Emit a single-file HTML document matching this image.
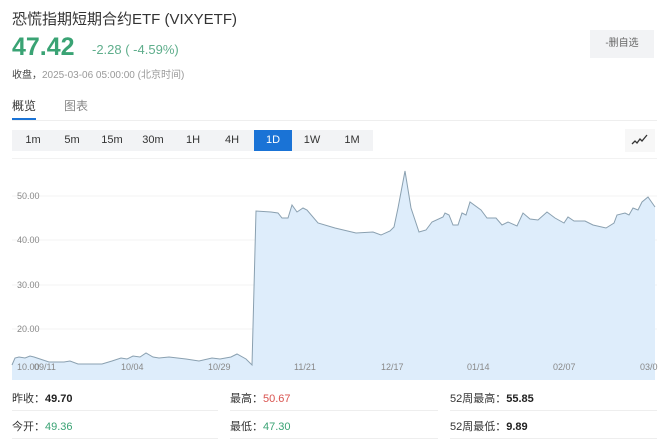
<!DOCTYPE html><html><head><meta charset="utf-8"><style>
body{margin:0;width:664px;height:447px;background:#fff;font-family:"Liberation Sans","Noto Sans CJK SC",sans-serif;position:relative;overflow:hidden;color:#333}
.a{position:absolute;white-space:nowrap}
.btn{position:absolute;top:130px;height:21px;line-height:21px;font-size:11px;text-align:center;color:#333}
.st{position:absolute;font-size:11px;color:#333}
.st b{color:#222}
.ln{position:absolute;height:1px;background:#eee}
</style></head><body>
<div class="a" style="left:12px;top:8px;font-size:15px;color:#333">恐慌指期短期合约ETF (VIXYETF)</div>
<div class="a" style="left:12px;top:33px;font-size:25px;font-weight:bold;color:#3aa374">47.42</div>
<div class="a" style="left:92px;top:42px;font-size:13px;color:#5fae8c">-2.28 ( -4.59%)</div>
<div class="a" style="left:12px;top:66px;font-size:10px;color:#999"><span style="color:#444">收盘，</span>2025-03-06 05:00:00 (北京时间)</div>
<div class="a" style="left:590px;top:30px;width:64px;height:28px;background:#f2f3f5;font-size:10px;color:#666;line-height:28px;text-align:center">-删自选</div>
<div class="a" style="left:12px;top:97px;font-size:12px;color:#333">概览</div>
<div class="a" style="left:64px;top:97px;font-size:12px;color:#888">图表</div>
<div class="a" style="left:12px;top:118px;width:24px;height:2px;background:#1a73d6"></div>
<div class="ln" style="left:12px;top:120px;width:645px"></div>
<div class="a" style="left:12px;top:130px;width:361px;height:21px;background:#f2f3f5"></div>
<div class="btn" style="left:20px;width:26px">1m</div>
<div class="btn" style="left:59px;width:26px">5m</div>
<div class="btn" style="left:99px;width:26px">15m</div>
<div class="btn" style="left:139px;width:28px">30m</div>
<div class="btn" style="left:180px;width:26px">1H</div>
<div class="btn" style="left:219px;width:26px">4H</div>
<div class="btn" style="left:254px;width:38px;background:#1a73d6;color:#fff">1D</div>
<div class="btn" style="left:298px;width:28px">1W</div>
<div class="btn" style="left:338px;width:28px">1M</div>
<div class="a" style="left:625px;top:129px;width:30px;height:23px;background:#f7f7f7"></div>
<svg class="a" style="left:630px;top:133px" width="20" height="14"><path d="M2 11 L5 8 L7 10 L10 6 L12 8 L17 2" fill="none" stroke="#333" stroke-width="1.3"/></svg>
<div class="ln" style="left:12px;top:158px;width:645px;background:#f2f2f2"></div>
<svg class="a" style="left:0;top:0" width="664" height="447">
<g stroke="#f3f3f3" stroke-width="1"><line x1="12" y1="196" x2="657" y2="196"/><line x1="12" y1="240" x2="657" y2="240"/><line x1="12" y1="285" x2="657" y2="285"/><line x1="12" y1="329" x2="657" y2="329"/></g>
<path d="M12 380 L12 365 L15 358 L19 357 L25 358 L30 356 L34 357 L40 359 L49 362 L64 362 L70 361 L78 364 L102 364 L112 361 L121 358 L127 359 L133 356 L140 357 L146 353 L153 357 L159 358 L169 357 L186 359 L199 361 L212 358 L220 359 L231 357 L237 354 L246 359 L252 365 L256 211 L271 212 L278 213 L282 218 L288 218 L292 205 L297 212 L303 208 L307 210 L318 223 L335 228 L356 233 L373 232 L381 235 L390 231 L394 227 L398 208 L405 171 L411 208 L419 232 L426 230 L432 222 L443 217 L445 213 L449 215 L453 225 L458 225 L462 213 L466 215 L470 202 L481 210 L487 218 L496 218 L502 225 L508 222 L517 226 L523 213 L530 219 L538 220 L547 212 L555 218 L564 223 L568 217 L574 221 L585 221 L593 225 L606 228 L614 223 L617 215 L625 213 L629 215 L633 208 L638 210 L642 202 L648 197 L655 207 L655 380 Z" fill="#deedfb" stroke="none"/>
<path d="M12 365 L15 358 L19 357 L25 358 L30 356 L34 357 L40 359 L49 362 L64 362 L70 361 L78 364 L102 364 L112 361 L121 358 L127 359 L133 356 L140 357 L146 353 L153 357 L159 358 L169 357 L186 359 L199 361 L212 358 L220 359 L231 357 L237 354 L246 359 L252 365 L256 211 L271 212 L278 213 L282 218 L288 218 L292 205 L297 212 L303 208 L307 210 L318 223 L335 228 L356 233 L373 232 L381 235 L390 231 L394 227 L398 208 L405 171 L411 208 L419 232 L426 230 L432 222 L443 217 L445 213 L449 215 L453 225 L458 225 L462 213 L466 215 L470 202 L481 210 L487 218 L496 218 L502 225 L508 222 L517 226 L523 213 L530 219 L538 220 L547 212 L555 218 L564 223 L568 217 L574 221 L585 221 L593 225 L606 228 L614 223 L617 215 L625 213 L629 215 L633 208 L638 210 L642 202 L648 197 L655 207" fill="none" stroke="#8aa0b0" stroke-width="1"/>
<g font-size="9" fill="#888" font-family="Liberation Sans,sans-serif">
<text x="17" y="199">50.00</text><text x="17" y="243">40.00</text><text x="17" y="288">30.00</text><text x="17" y="332">20.00</text><text x="17" y="370">10.00</text>
<text x="34" y="370">09/11</text><text x="121" y="370">10/04</text><text x="208" y="370">10/29</text><text x="294" y="370">11/21</text><text x="381" y="370">12/17</text><text x="467" y="370">01/14</text><text x="553" y="370">02/07</text><text x="640" y="370">03/0</text>
</g></svg>
<div class="st" style="left:12px;top:390px">昨收：<b>49.70</b></div>
<div class="st" style="left:230px;top:390px">最高：<b style="color:#d9534f;font-weight:normal">50.67</b></div>
<div class="st" style="left:450px;top:390px">52周最高：<b>55.85</b></div>
<div class="ln" style="left:12px;top:410px;width:206px"></div><div class="ln" style="left:230px;top:410px;width:208px"></div><div class="ln" style="left:450px;top:410px;width:207px"></div>
<div class="st" style="left:12px;top:418px">今开：<b style="color:#3aa374;font-weight:normal">49.36</b></div>
<div class="st" style="left:230px;top:418px">最低：<b style="color:#3aa374;font-weight:normal">47.30</b></div>
<div class="st" style="left:450px;top:418px">52周最低：<b>9.89</b></div>
<div class="ln" style="left:12px;top:438px;width:206px"></div><div class="ln" style="left:230px;top:438px;width:208px"></div><div class="ln" style="left:450px;top:438px;width:207px"></div>
</body></html>
